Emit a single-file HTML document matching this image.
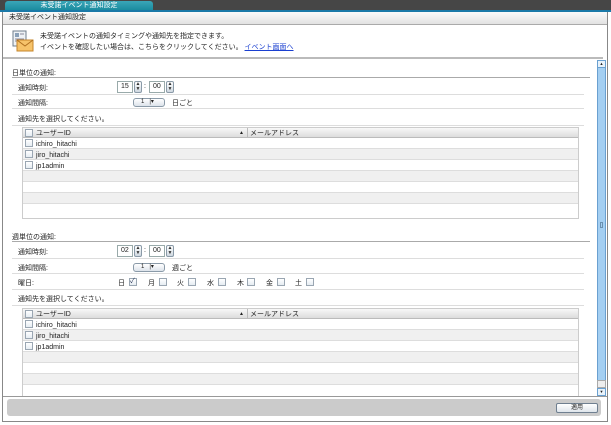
<!DOCTYPE html>
<html><head><meta charset="utf-8"><style>
*{margin:0;padding:0;box-sizing:border-box}
body{width:611px;height:425px;background:#fff;font-family:"Liberation Sans","Noto Sans CJK JP",sans-serif;font-size:7px;color:#222;position:relative;overflow:hidden}
.a{position:absolute;white-space:nowrap}
.hl{position:absolute;height:1px;background:#ddd}
.spin{position:absolute;height:12px;border:1px solid #9aa;background:#fff;font-size:7px;line-height:10px;padding-left:3px}
.sb{position:absolute;width:8px;height:12px;border:1px solid #8a9aa8;border-radius:2px;background:linear-gradient(#fff,#cfd8e0);font-size:5px;line-height:5px;text-align:center;color:#333}
.sel{position:absolute;width:32px;height:9px;border:1px solid #8a9aa8;border-radius:3px;background:linear-gradient(#fff,#dde3ea);font-size:6px;line-height:7px;padding-left:7px}
.cb{position:absolute;width:8px;height:8px;border:1px solid #9aa6b2;background:linear-gradient(#fff,#e6ecf2)}
.tbl{position:absolute;left:22px;width:557px;border:1px solid #ccc}
.th{height:10px;background:linear-gradient(#f8f8f8,#dcdcdc);border-bottom:1px solid #bbb;position:relative;line-height:9px}
.th span{top:1px}
.tr{height:11px;border-bottom:1px solid #ddd;position:relative;font-size:7px;line-height:10px}
.tr span{top:2px}
</style></head><body>
<div class="a" style="left:0;top:0;width:611px;height:11px;background:#464646"></div>
<div class="a" style="left:5px;top:1px;width:148px;height:10px;background:linear-gradient(#3aa6b8,#17889c);border-radius:3px 3px 0 0;color:#fff;font-size:7px;line-height:9px;text-align:center">未受諾イベント通知設定</div>
<div class="a" style="left:0;top:10px;width:611px;height:2px;background:#1a79a8"></div>
<div class="a" style="left:2px;top:12px;width:606px;height:410px;border:1px solid #888;border-top:none"></div>
<div class="a" style="left:3px;top:12px;width:604px;height:13px;background:linear-gradient(#fafafa,#e2e2e2);border-bottom:1px solid #aaa;font-size:7px;line-height:12px;padding-left:6px">未受諾イベント通知設定</div>
<svg class="a" style="left:12px;top:30px" width="22" height="22" viewBox="0 0 22 22">
<rect x="1" y="1" width="13" height="15" fill="#eef2f6" stroke="#6f7d8c"/>
<rect x="3" y="3" width="4" height="4" fill="#8aa0b8"/>
<line x1="8" y1="4" x2="12" y2="4" stroke="#889"/><line x1="3" y1="9" x2="12" y2="9" stroke="#889"/><line x1="3" y1="11" x2="12" y2="11" stroke="#889"/>
<rect x="5" y="10" width="16" height="11" fill="#f6c36a" stroke="#c6862a"/>
<polyline points="5,10 13,16 21,10" fill="none" stroke="#b07020"/>
</svg>
<div class="a" style="left:40px;top:31px;font-size:7px">未受諾イベントの通知タイミングや通知先を指定できます。</div>
<div class="a" style="left:40px;top:42px;font-size:7px">イベントを確認したい場合は、こちらをクリックしてください。 <span style="color:#1a3fd0;text-decoration:underline">イベント画面へ</span></div>
<div class="a" style="left:3px;top:57px;width:600px;height:2px;background:#bbb"></div>
<div class="a" style="left:597px;top:60px;width:9px;height:336px;background:#a4cff2;border:1px solid #6aa0d0"></div>
<div class="a" style="left:600px;top:222px;width:3px;height:6px;border:1px solid #6a90b0"></div>
<div class="a" style="left:597px;top:60px;width:9px;height:8px;background:#e8f2fa;border:1px solid #6aa0d0;font-size:4px;text-align:center;line-height:6px">▲</div>
<div class="a" style="left:597px;top:380px;width:9px;height:8px;background:#eee;border:1px solid #aaa"></div>
<div class="a" style="left:597px;top:388px;width:9px;height:8px;background:#e8f2fa;border:1px solid #6aa0d0;font-size:4px;text-align:center;line-height:6px">▼</div>

<div class="a" style="left:12px;top:68px">日単位の通知:</div>
<div class="hl" style="left:12px;top:77px;width:578px;background:#aaa"></div>
<div class="a" style="left:18px;top:83px">通知時刻:</div>
<div class="spin" style="left:117px;top:81px;width:16px">15</div><div class="sb" style="left:134px;top:81px">▲<br>▼</div>
<div class="a" style="left:144px;top:83px">:</div>
<div class="spin" style="left:149px;top:81px;width:16px">00</div><div class="sb" style="left:166px;top:81px">▲<br>▼</div>
<div class="hl" style="left:12px;top:94px;width:572px"></div>
<div class="a" style="left:18px;top:98px">通知間隔:</div>
<div class="sel" style="left:133px;top:98px">1 &nbsp;&nbsp;|▾</div>
<div class="a" style="left:172px;top:98px">日ごと</div>
<div class="hl" style="left:12px;top:108px;width:572px"></div>
<div class="a" style="left:18px;top:114px">通知先を選択してください。</div>
<div class="hl" style="left:12px;top:125px;width:572px"></div>
<div class="tbl" style="top:127px;height:92px">
<div class="th"><div class="cb" style="left:2px;top:1px"></div><span class="a" style="left:13px">ユーザーID</span><span class="a" style="left:216px;font-size:5px">▲</span><span class="a" style="left:224px;top:0;width:1px;height:10px;background:#bbb"></span><span class="a" style="left:227px">メールアドレス</span></div>
<div class="tr" style="background:#fff"><div class="cb" style="left:2px;top:1px"></div><span class="a" style="left:13px">ichiro_hitachi</span></div>
<div class="tr" style="background:#f0f0f0"><div class="cb" style="left:2px;top:1px"></div><span class="a" style="left:13px">jiro_hitachi</span></div>
<div class="tr" style="background:#fff"><div class="cb" style="left:2px;top:1px"></div><span class="a" style="left:13px">jp1admin</span></div>
<div class="tr" style="background:#f0f0f0"></div><div class="tr" style="background:#fff"></div><div class="tr" style="background:#f0f0f0"></div><div class="tr" style="background:#fff;border:none"></div>
</div>

<div class="a" style="left:12px;top:232px">週単位の通知:</div>
<div class="hl" style="left:12px;top:241px;width:578px;background:#aaa"></div>
<div class="a" style="left:18px;top:247px">通知時刻:</div>
<div class="spin" style="left:117px;top:245px;width:16px">02</div><div class="sb" style="left:134px;top:245px">▲<br>▼</div>
<div class="a" style="left:144px;top:247px">:</div>
<div class="spin" style="left:149px;top:245px;width:16px">00</div><div class="sb" style="left:166px;top:245px">▲<br>▼</div>
<div class="hl" style="left:12px;top:258px;width:572px"></div>
<div class="a" style="left:18px;top:263px">通知間隔:</div>
<div class="sel" style="left:133px;top:263px">1 &nbsp;&nbsp;|▾</div>
<div class="a" style="left:172px;top:263px">週ごと</div>
<div class="hl" style="left:12px;top:273px;width:572px"></div>
<div class="a" style="left:18px;top:278px">曜日:</div>
<div class="a" style="left:118px;top:278px">日</div><div class="cb" style="left:129px;top:278px;font-size:7px;line-height:6px;color:#235">✓</div>
<div class="a" style="left:148px;top:278px">月</div><div class="cb" style="left:159px;top:278px"></div>
<div class="a" style="left:177px;top:278px">火</div><div class="cb" style="left:188px;top:278px"></div>
<div class="a" style="left:207px;top:278px">水</div><div class="cb" style="left:218px;top:278px"></div>
<div class="a" style="left:237px;top:278px">木</div><div class="cb" style="left:247px;top:278px"></div>
<div class="a" style="left:266px;top:278px">金</div><div class="cb" style="left:277px;top:278px"></div>
<div class="a" style="left:295px;top:278px">土</div><div class="cb" style="left:306px;top:278px"></div>
<div class="hl" style="left:12px;top:289px;width:572px"></div>
<div class="a" style="left:18px;top:294px">通知先を選択してください。</div>
<div class="hl" style="left:12px;top:305px;width:572px"></div>
<div class="tbl" style="top:308px;height:88px;border-bottom:none">
<div class="th"><div class="cb" style="left:2px;top:1px"></div><span class="a" style="left:13px">ユーザーID</span><span class="a" style="left:216px;font-size:5px">▲</span><span class="a" style="left:224px;top:0;width:1px;height:10px;background:#bbb"></span><span class="a" style="left:227px">メールアドレス</span></div>
<div class="tr" style="background:#fff"><div class="cb" style="left:2px;top:1px"></div><span class="a" style="left:13px">ichiro_hitachi</span></div>
<div class="tr" style="background:#f0f0f0"><div class="cb" style="left:2px;top:1px"></div><span class="a" style="left:13px">jiro_hitachi</span></div>
<div class="tr" style="background:#fff"><div class="cb" style="left:2px;top:1px"></div><span class="a" style="left:13px">jp1admin</span></div>
<div class="tr" style="background:#f0f0f0"></div><div class="tr" style="background:#fff"></div><div class="tr" style="background:#f0f0f0"></div>
</div>

<div class="a" style="left:3px;top:396px;width:604px;height:1px;background:#999"></div>
<div class="a" style="left:7px;top:399px;width:594px;height:17px;background:#cbcbcb;border-radius:3px"></div>
<div class="a" style="left:556px;top:403px;width:42px;height:10px;border:1px solid #6f7f90;border-radius:2px;background:linear-gradient(#fff,#dfe5eb);font-size:6px;line-height:8px;text-align:center">適用</div>
</body></html>
